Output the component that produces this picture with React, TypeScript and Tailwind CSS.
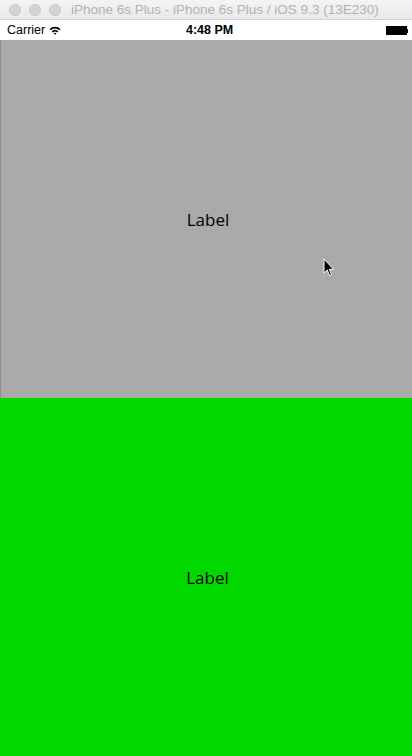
export default function App() {
  return (
    <div className="relative flex h-[756px] w-[412px] flex-col overflow-hidden font-['Liberation_Sans',Arial,sans-serif]">
      {/* window title bar */}
      <div className="flex h-[20px] items-center border-b border-[#d4d4d4] bg-gradient-to-b from-[#f4f4f4] to-[#e8e8e8]">
        <div className="ml-[9px] flex gap-[8px]">
          <div className="h-[12px] w-[12px] rounded-full bg-[#d3d3d3] border border-[#c8c8c8]" />
          <div className="h-[12px] w-[12px] rounded-full bg-[#d3d3d3] border border-[#c8c8c8]" />
          <div className="h-[12px] w-[12px] rounded-full bg-[#d3d3d3] border border-[#c8c8c8]" />
        </div>
        <div className="ml-[10px] text-[13.5px] leading-none text-[#b2b2b2]">
          iPhone 6s Plus - iPhone 6s Plus / iOS 9.3 (13E230)
        </div>
      </div>
      {/* status bar */}
      <div className="relative flex h-[20px] items-center bg-white">
        <span className="ml-[7px] text-[12.5px] leading-none text-black">Carrier</span>
        <svg className="ml-[4px]" width="12" height="9" viewBox="0 0 12 9">
          <path d="M0.5 3 A8 8 0 0 1 11.5 3 L10.3 4.3 A6.3 6.3 0 0 0 1.7 4.3 Z" fill="black" />
          <path d="M2.6 5.3 A5 5 0 0 1 9.4 5.3 L8.2 6.5 A3.3 3.3 0 0 0 3.8 6.5 Z" fill="black" />
          <path d="M4.7 7.4 A2 2 0 0 1 7.3 7.4 L6 8.8 Z" fill="black" />
        </svg>
        <span className="absolute left-[186px] top-[4px] text-[12.5px] font-bold leading-none text-black">4:48 PM</span>
        <div className="absolute right-[4px] top-[6px] flex items-center">
          <div className="h-[9px] w-[21px] bg-black" />
          <div className="h-[4px] w-[1px] bg-black" />
        </div>
      </div>
      {/* gray section */}
      <div className="flex flex-1 items-center justify-center border-l border-[#9a8a80] bg-[#aaaaaa]">
        <span className="text-[17px] text-black font-['Open_Sans',sans-serif] ml-[3px] mt-[2px]">Label</span>
      </div>
      {/* green section */}
      <div className="flex h-[358px] items-center justify-center bg-[#00d800]">
        <span className="text-[17px] text-black font-['Open_Sans',sans-serif] ml-[3px] mt-[2px]">Label</span>
      </div>
      {/* mouse cursor */}
      <svg className="absolute left-[323px] top-[258px]" width="12" height="19" viewBox="0 0 12 19">
        <path d="M1 1 L1 15 L4.2 12 L6.6 17.5 L8.6 16.6 L6.3 11.3 L10.6 11.3 Z" fill="black" stroke="white" strokeWidth="1" />
      </svg>
    </div>
  );
}
